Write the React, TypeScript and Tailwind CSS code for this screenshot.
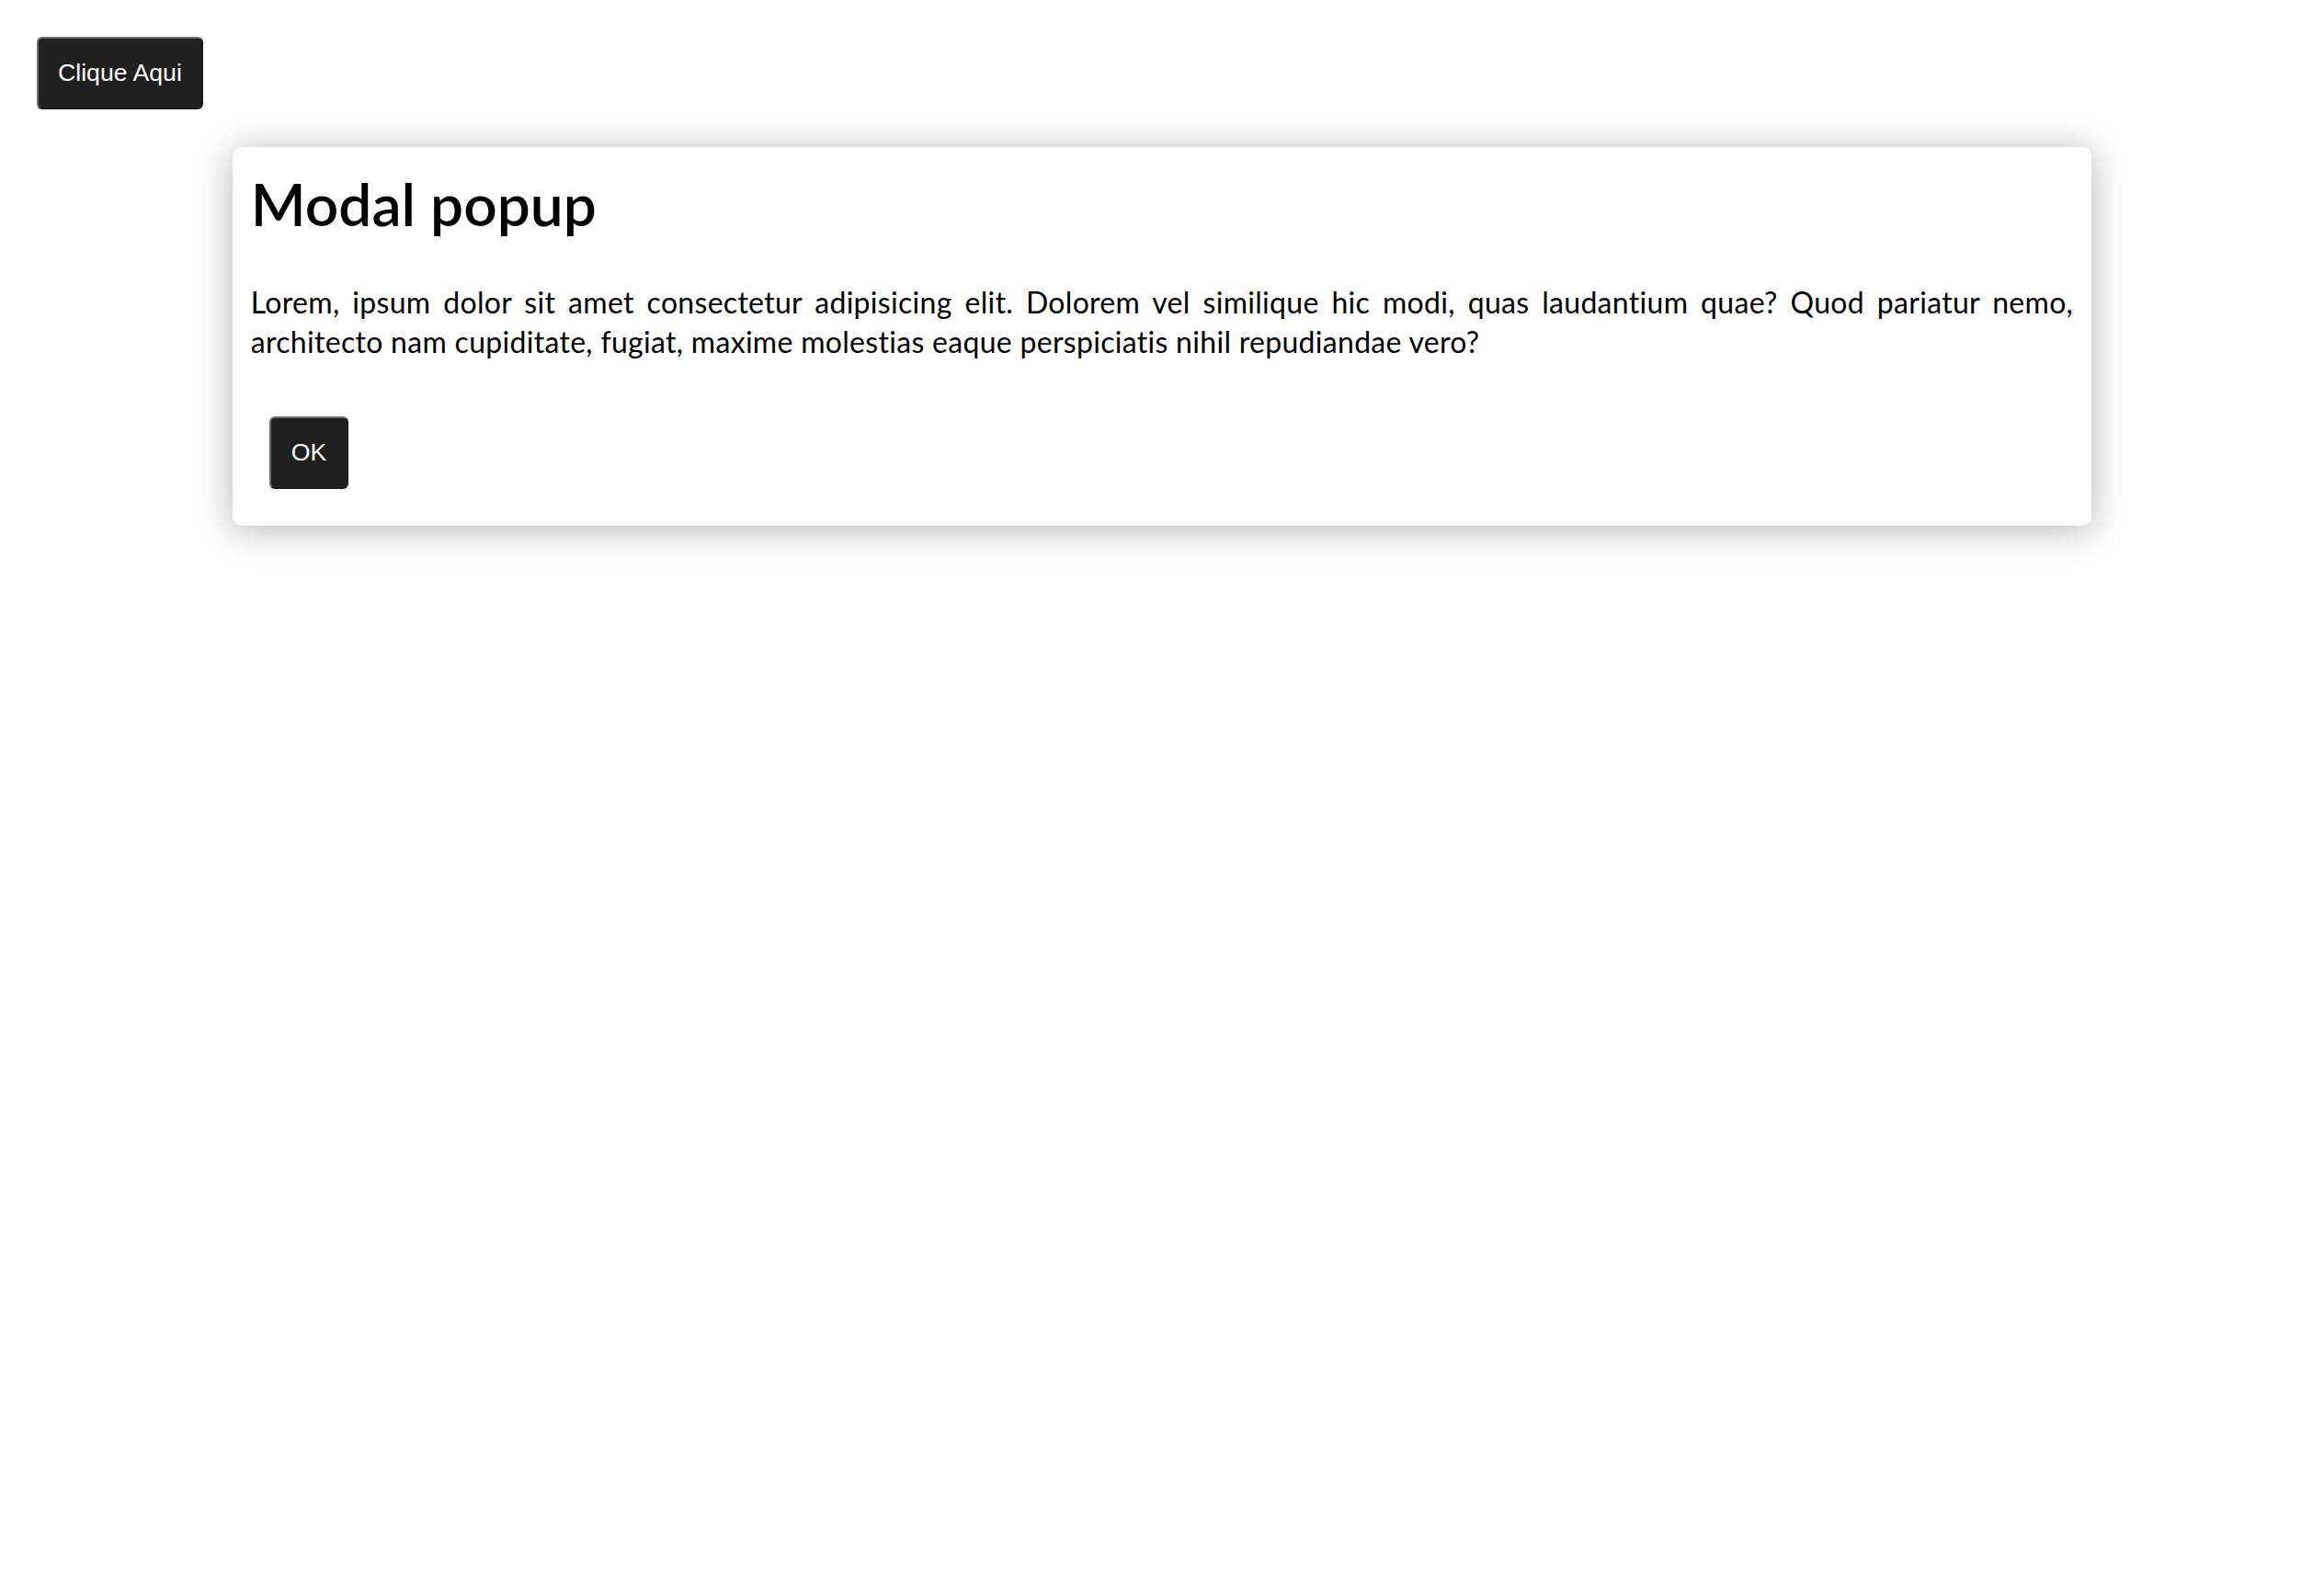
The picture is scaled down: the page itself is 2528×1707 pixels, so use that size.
import React from "react";

const App: React.FC<{}> = () => {
    return (
        <div className="min-h-screen bg-white">
            <div className="px-10 pt-10">
                <button className="rounded-md border-2 border-[#6e6e6e] border-r-[#1c1c1c] border-b-[#1c1c1c] bg-[#202020] px-[21px] py-[22px] text-[26.67px] leading-[31px] text-white font-['Liberation_Sans',Arial,sans-serif]">
                    Clique Aqui
                </button>
            </div>

            <div className="mx-auto mt-[41px] w-[80%] rounded-[10px] bg-white px-5 pt-5 pb-5 shadow-[0_4px_40px_rgba(0,0,0,0.3)] font-['Lato',sans-serif] text-black">
                <h1 className="text-[64px] leading-[84px] font-semibold">
                    Modal popup
                </h1>
                <p className="mt-[43px] text-justify text-[32px] leading-[43px] tracking-[0.3px]">
                    Lorem, ipsum dolor sit amet consectetur adipisicing elit. Dolorem vel similique hic modi,
                    quas laudantium quae? Quod pariatur nemo, architecto nam cupiditate, fugiat, maxime
                    molestias eaque perspiciatis nihil repudiandae vero?
                </p>
                <div className="flex">
                    <button className="mt-[60px] mb-5 ml-5 rounded-md border-2 border-[#6e6e6e] border-r-[#1c1c1c] border-b-[#1c1c1c] bg-[#202020] px-[22px] py-[22px] text-[26.67px] leading-[31px] text-white font-['Liberation_Sans',Arial,sans-serif]">
                        OK
                    </button>
                </div>
            </div>
        </div>
    );
};

export default App;
